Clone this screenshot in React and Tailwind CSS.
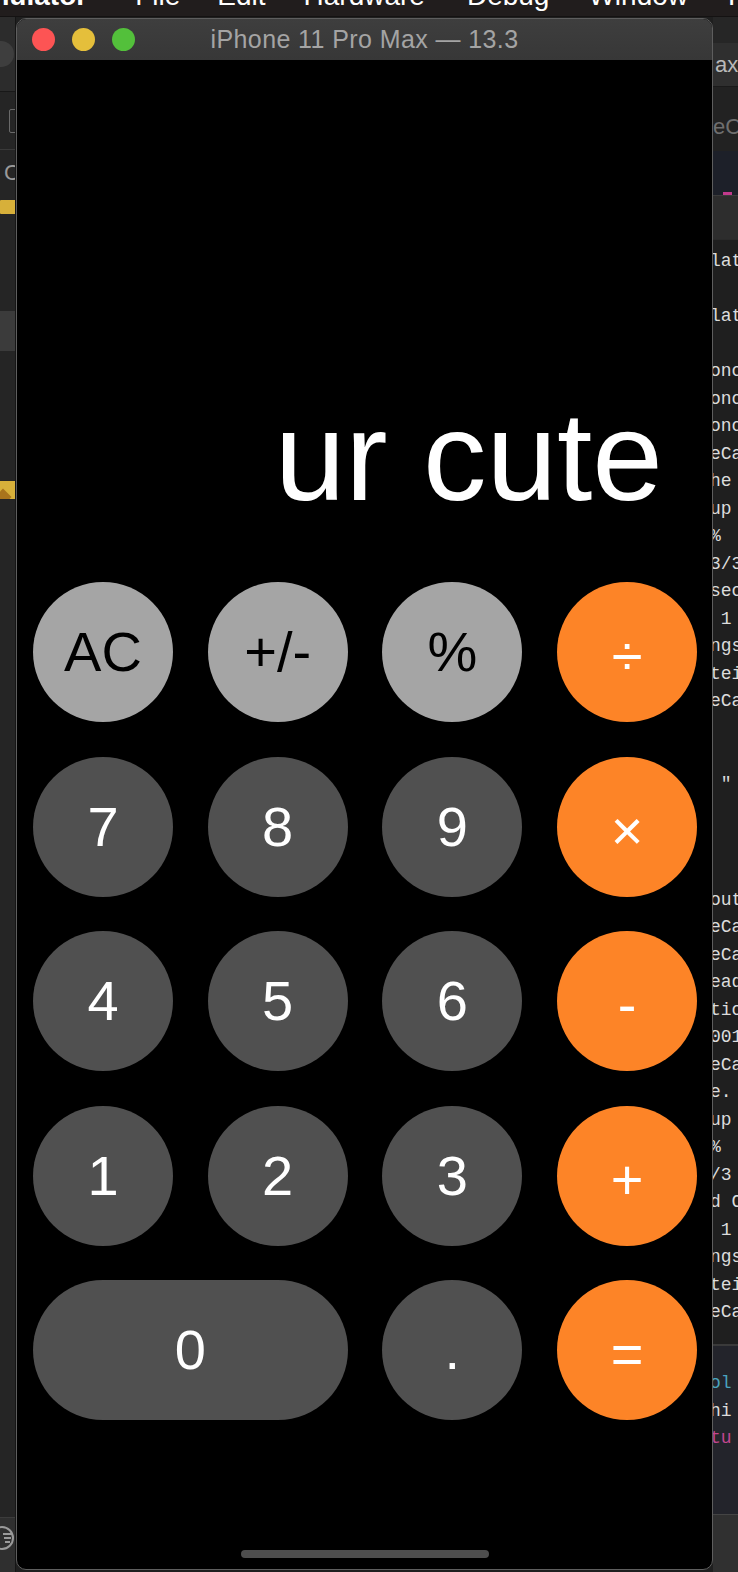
import React from "react";

const code1 = ["lat", "", "lat", "", "onc", "onc", "onc", "eCa", "he", "up", "%", "3/3", "sec", " 1", "ngs", "tei", "eCa", "", "", ' "', "", "", ""];
const code2 = ["out", "eCa", "eCa", "ead", "tio", "001", "eCa", "e.", "up", "%", "/3", "d C", " 1", "ngs", "tei", "eCa"];

function Btn({ label, kind, wide }) {
  const base =
    "h-[140px] rounded-full flex items-center justify-center leading-none text-[56px] select-none";
  let cls = "";
  if (kind === "light") cls = "bg-[#a5a5a5] text-black";
  else if (kind === "dark") cls = "bg-[#505050] text-white";
  else cls = "bg-[#fd8427] text-white pt-[8px]";
  return <div className={`${base} ${cls} ${wide ? "col-span-2" : ""}`}>{label}</div>;
}

function MenuBar() {
  return (
    <div className="h-[17px] shrink-0 bg-[#211d1d] overflow-hidden border-b border-[#141212]">
      <div className="flex whitespace-nowrap text-white text-[28px] leading-none mt-[-18px]">
        <span className="font-bold ml-[-42px]">Simulator</span>
        <span className="ml-[48px]">File</span>
        <span className="ml-[37px]">Edit</span>
        <span className="ml-[38px]">Hardware</span>
        <span className="ml-[42px]">Debug</span>
        <span className="ml-[39px]">Window</span>
        <span className="ml-[40px]">Help</span>
      </div>
    </div>
  );
}

function LeftStrip() {
  return (
    <div className="w-[16px] shrink-0 flex flex-col bg-[#252525] overflow-hidden border-r border-[#151515]">
      <div className="h-[75px] shrink-0 bg-[#2c2c2c] border-b border-[#181818] pt-[24px]">
        <div className="w-[26px] h-[26px] rounded-full bg-[#3e3e3e] ml-[-12px]"></div>
      </div>
      <div className="h-[58px] shrink-0 border-b border-[#3a3a3a] pt-[17px]">
        <div className="w-[14px] h-[24px] ml-[9px] border border-[#6a6a6a] rounded-[2px]"></div>
      </div>
      <div className="h-[30px] shrink-0 text-[#9a9a9a] text-[22px] leading-none pt-[12px] pl-[4px]">C</div>
      <div className="mt-[20px] h-[14px] w-[16px] bg-[#d7b03a] rounded-l-[1px]"></div>
      <div className="mt-[97px] h-[40px] bg-[#3b3b3b]"></div>
      <div className="mt-[130px] h-[18px] w-[16px] bg-[#d7b03a] relative overflow-hidden">
        <div className="w-[12px] h-[12px] bg-[#a9741c] rotate-45 mt-[10px] ml-[-3px]"></div>
      </div>
      <div className="flex-1"></div>
      <div className="h-[55px] shrink-0 bg-[#2f2f2f] border-t border-[#3c3c3c] pt-[8px]">
        <div className="w-[24px] h-[24px] ml-[-10px] rounded-full border-2 border-[#9a9a9a] flex flex-col items-center justify-center gap-[2px] pl-[10px]">
          <div className="w-[9px] h-[2px] bg-[#9a9a9a]"></div>
          <div className="w-[7px] h-[2px] bg-[#9a9a9a]"></div>
          <div className="w-[5px] h-[2px] bg-[#9a9a9a]"></div>
        </div>
      </div>
    </div>
  );
}

function CodeLine({ t, color }) {
  return (
    <div className={`h-[27.5px] leading-[27.5px] whitespace-pre ml-[-3px] ${color || "text-[#dcdcdc]"}`}>{t}</div>
  );
}

function RightStrip() {
  return (
    <div
      className="flex-1 flex flex-col overflow-hidden bg-[#1f1f1f] text-[18px]"
      style={{ fontFamily: '"Liberation Mono", "DejaVu Sans Mono", monospace' }}
    >
      <div className="h-[26px] shrink-0 bg-[#262626]"></div>
      <div
        className="h-[44px] shrink-0 bg-[#2f2f2f] text-[#b9b9b9] text-[22px] leading-[44px] pl-[2px] border-b border-[#1a1a1a]"
        style={{ fontFamily: '"Liberation Sans", Arial, sans-serif' }}
      >
        ax
      </div>
      <div
        className="h-[64px] shrink-0 bg-[#222222] text-[#6f6f6f] text-[22px] leading-[64px] pt-[8px]"
        style={{ fontFamily: '"Liberation Sans", Arial, sans-serif' }}
      >
        eC
      </div>
      <div className="h-[44px] shrink-0 bg-[#1d2029] flex flex-col justify-end">
        <div className="w-[9px] h-[3px] bg-[#c23a8c] ml-[10px]"></div>
      </div>
      <div className="h-[44px] shrink-0 bg-[#2d2d2d] border-t border-[#3b3b3b]"></div>
      <div className="h-[1105px] shrink-0 pt-[8px] border-t border-[#2a2a2a]">
        {code1.map((t, i) => (
          <CodeLine key={"a" + i} t={t} />
        ))}
        <div className="h-[6px]"></div>
        {code2.map((t, i) => (
          <CodeLine key={"b" + i} t={t} />
        ))}
      </div>
      <div className="h-[170px] shrink-0 bg-[#23242b] border-t-2 border-[#3a3a3a] pt-[24px]">
        <CodeLine t="ol" color="text-[#4aa3be]" />
        <CodeLine t="hi" color="text-[#dcdcdc]" />
        <CodeLine t="tu" color="text-[#c2468f]" />
      </div>
      <div className="flex-1 bg-[#303030] border-t border-[#444]"></div>
    </div>
  );
}

function SimWindow() {
  return (
    <div className="w-[697px] shrink-0 mt-[1px] mb-[2px] flex flex-col rounded-[10px] border border-[#5e5e5e] overflow-hidden bg-black">
      <div className="h-[42px] shrink-0 bg-gradient-to-b from-[#3e3e3e] to-[#373737] border-b border-black grid grid-cols-[1fr_auto_1fr] items-center">
        <div className="flex items-center gap-[17px] pl-[15px]">
          <div className="w-[23px] h-[23px] rounded-full bg-[#fd5454]"></div>
          <div className="w-[23px] h-[23px] rounded-full bg-[#e5bf3b]"></div>
          <div className="w-[23px] h-[23px] rounded-full bg-[#53c03b]"></div>
        </div>
        <div className="text-[#a4a4a4] text-[25px] tracking-[0.4px] leading-none whitespace-nowrap">iPhone 11 Pro Max — 13.3</div>
        <div></div>
      </div>
      <div className="flex-1 flex flex-col pt-[332px] pl-[15px] pr-[15px]">
        <div className="h-[126px] text-[127px] leading-none text-white text-right pr-[34px] whitespace-nowrap">
          ur cute
        </div>
        <div className="mt-[63px] grid grid-cols-4 gap-x-[34.67px] gap-y-[34.5px] pl-[1px]">
          <Btn label="AC" kind="light" />
          <Btn label="+/-" kind="light" />
          <Btn label="%" kind="light" />
          <Btn label="÷" kind="op" />
          <Btn label="7" kind="dark" />
          <Btn label="8" kind="dark" />
          <Btn label="9" kind="dark" />
          <Btn label="×" kind="op" />
          <Btn label="4" kind="dark" />
          <Btn label="5" kind="dark" />
          <Btn label="6" kind="dark" />
          <Btn label="-" kind="op" />
          <Btn label="1" kind="dark" />
          <Btn label="2" kind="dark" />
          <Btn label="3" kind="dark" />
          <Btn label="+" kind="op" />
          <Btn label="0" kind="dark" wide />
          <Btn label="." kind="dark" />
          <Btn label="=" kind="op" />
        </div>
        <div className="mt-auto mb-[11px] self-center w-[248px] h-[8px] rounded-full bg-[#4e4e4e]"></div>
      </div>
    </div>
  );
}

export default function App() {
  return (
    <div
      className="w-[738px] h-[1572px] flex flex-col overflow-hidden bg-[#1f1f1f]"
      style={{ fontFamily: '"Liberation Sans", Arial, sans-serif' }}
    >
      <MenuBar />
      <div className="flex flex-1 min-h-0">
        <LeftStrip />
        <SimWindow />
        <RightStrip />
      </div>
    </div>
  );
}
